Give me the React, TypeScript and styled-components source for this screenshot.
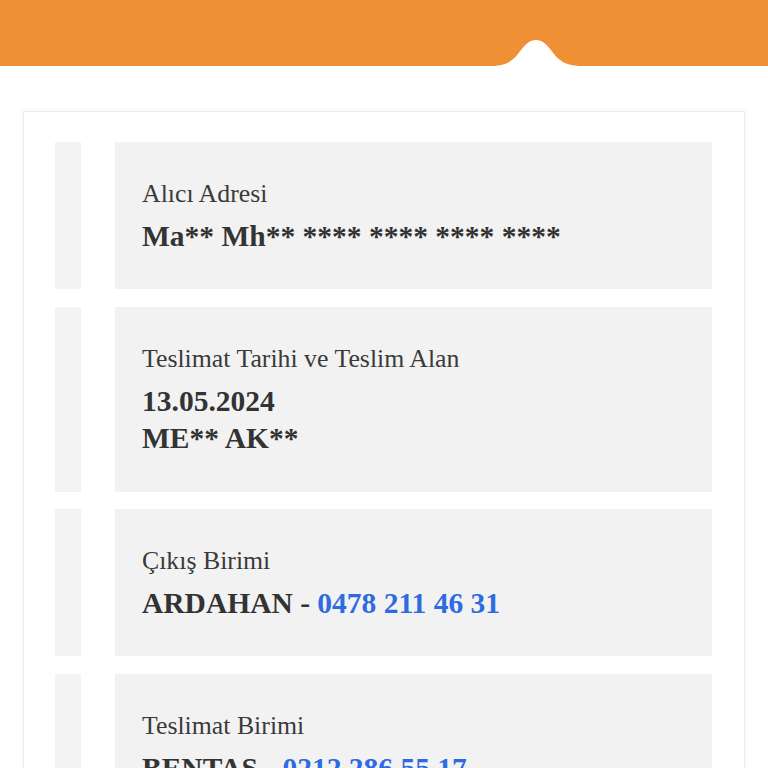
import { FC } from 'react';
import styled, { createGlobalStyle } from 'styled-components';

const GlobalStyle = createGlobalStyle`
  body {
    margin: 0;
    background: #ffffff;
    font-family: "Liberation Serif", "Times New Roman", serif;
    color: #333333;
  }
`;

const Header = styled.div`
  position: relative;
  height: 66px;
  background-color: #ef9035;
`;

const Bump = styled.svg`
  position: absolute;
  left: 488px;
  bottom: 0;
  width: 96px;
  height: 26px;
  display: block;
`;

const Card = styled.div`
  margin: 45px 23px 0;
  padding: 30px 32px 0 31px;
  background: #ffffff;
  border: 1px solid #ececec;
  box-shadow: 0 0 6px rgba(0, 0, 0, 0.06);
`;

const Row = styled.div`
  display: flex;
  gap: 34px;
  margin-bottom: 17.5px;
`;

const SideBar = styled.div`
  width: 26px;
  flex-shrink: 0;
  background: #f3f3f3;
`;

const InfoBox = styled.div`
  flex: 1;
  background: #f2f2f2;
  padding: 35px 27px 34px;
`;

const Label = styled.div`
  font-size: 25.8px;
  line-height: 33.3px;
  color: #3a3a3a;
`;

const Value = styled.div`
  margin-top: 7.5px;
  font-size: 29.5px;
  line-height: 37.5px;
  font-weight: bold;
  color: #333333;
`;

const Phone = styled.span`
  color: #2f6be0;
`;

interface InfoRowProps {
  label: string;
  lines?: string[];
  unit?: string;
  phone?: string;
}

const InfoRow: FC<InfoRowProps> = ({ label, lines, unit, phone }) => (
  <Row>
    <SideBar />
    <InfoBox>
      <Label>{label}</Label>
      <Value>
        {lines && lines.map((l, i) => <div key={i}>{l}</div>)}
        {unit && (
          <>
            {unit} - <Phone>{phone}</Phone>
          </>
        )}
      </Value>
    </InfoBox>
  </Row>
);

const App: FC = () => {
  return (
    <>
      <GlobalStyle />
      <Header>
        <Bump viewBox="0 0 96 26" preserveAspectRatio="none">
          <path
            d="M0 26 C14 26 22 24 30 14 C38 3 42 0 48 0 C54 0 58 3 66 14 C74 24 82 26 96 26 Z"
            fill="#ffffff"
          />
        </Bump>
      </Header>
      <Card>
        <InfoRow label="Alıcı Adresi" lines={['Ma** Mh** **** **** **** ****']} />
        <InfoRow label="Teslimat Tarihi ve Teslim Alan" lines={['13.05.2024', 'ME** AK**']} />
        <InfoRow label="Çıkış Birimi" unit="ARDAHAN" phone="0478 211 46 31" />
        <InfoRow label="Teslimat Birimi" unit="BENTAŞ" phone="0212 286 55 17" />
      </Card>
    </>
  );
};

export default App;
